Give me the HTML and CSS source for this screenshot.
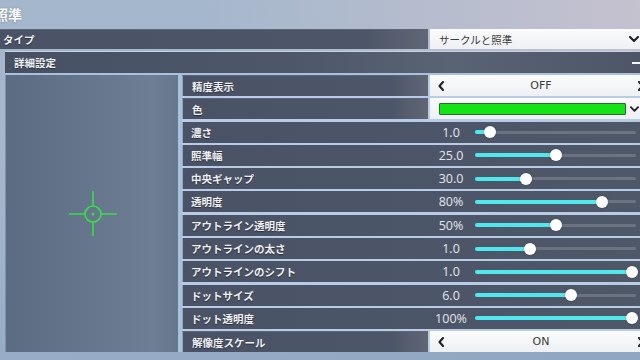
FILE: index.html
```html
<!DOCTYPE html>
<html lang="ja">
<head>
    <meta charset="utf-8">
    <title>照準</title>
    <link rel="stylesheet" href="styles.css">
</head>
<body>
    <h1 class="title">照準</h1>

    <div class="type-row">
        <div class="cell">タイプ</div>
        <div class="select dropdown">
            <span>サークルと照準</span>
            <svg class="chev-down" width="10" height="6" viewBox="0 0 10 6"><path d="M1 1 L5 5 L9 1" /></svg>
        </div>
    </div>

    <section class="advanced">
        <div class="advanced-head">
            <span>詳細設定</span>
            <span class="collapse"></span>
        </div>
        <div class="advanced-body">
            <div class="preview">
                <svg class="crosshair" width="48" height="48" viewBox="0 0 48 48">
                    <circle cx="24" cy="24" r="8" />
                    <path d="M0 24 H16 M32 24 H48 M24 1 V16 M24 32 V46" />
                    <circle class="dot" cx="24" cy="24" r="1.6" />
                </svg>
            </div>

            <div class="rows">
                <div class="row pick">
                    <div class="cell">精度表示</div>
                    <div class="select stepper">
                        <svg class="chev" width="6" height="10" viewBox="0 0 6 10"><path d="M5 1 L1.5 5 L5 9" /></svg>
                        <span>OFF</span>
                        <svg class="chev" width="6" height="10" viewBox="0 0 6 10"><path d="M1 1 L4.5 5 L1 9" /></svg>
                    </div>
                </div>
                <div class="row pick">
                    <div class="cell">色</div>
                    <div class="select dropdown">
                        <span class="swatch"></span>
                        <svg class="chev-down" width="9" height="6" viewBox="0 0 10 6"><path d="M1 1 L5 5 L9 1" /></svg>
                    </div>
                </div>
                <div class="row slide" style="--v:0.066">
                    <span class="cell">濃さ</span><span class="value">1.0</span>
                    <span class="track"><i class="fill"></i><i class="thumb"></i></span>
                </div>
                <div class="row slide" style="--v:0.5">
                    <span class="cell">照準幅</span><span class="value">25.0</span>
                    <span class="track"><i class="fill"></i><i class="thumb"></i></span>
                </div>
                <div class="row slide" style="--v:0.3">
                    <span class="cell">中央ギャップ</span><span class="value">30.0</span>
                    <span class="track"><i class="fill"></i><i class="thumb"></i></span>
                </div>
                <div class="row slide" style="--v:0.8">
                    <span class="cell">透明度</span><span class="value">80%</span>
                    <span class="track"><i class="fill"></i><i class="thumb"></i></span>
                </div>
                <div class="row slide" style="--v:0.5">
                    <span class="cell">アウトライン透明度</span><span class="value">50%</span>
                    <span class="track"><i class="fill"></i><i class="thumb"></i></span>
                </div>
                <div class="row slide" style="--v:0.33">
                    <span class="cell">アウトラインの太さ</span><span class="value">1.0</span>
                    <span class="track"><i class="fill"></i><i class="thumb"></i></span>
                </div>
                <div class="row slide" style="--v:1">
                    <span class="cell">アウトラインのシフト</span><span class="value">1.0</span>
                    <span class="track"><i class="fill"></i><i class="thumb"></i></span>
                </div>
                <div class="row slide" style="--v:0.6">
                    <span class="cell">ドットサイズ</span><span class="value">6.0</span>
                    <span class="track"><i class="fill"></i><i class="thumb"></i></span>
                </div>
                <div class="row slide" style="--v:1">
                    <span class="cell">ドット透明度</span><span class="value">100%</span>
                    <span class="track"><i class="fill"></i><i class="thumb"></i></span>
                </div>
                <div class="row pick">
                    <div class="cell">解像度スケール</div>
                    <div class="select stepper">
                        <svg class="chev" width="6" height="10" viewBox="0 0 6 10"><path d="M5 1 L1.5 5 L5 9" /></svg>
                        <span>ON</span>
                        <svg class="chev" width="6" height="10" viewBox="0 0 6 10"><path d="M1 1 L4.5 5 L1 9" /></svg>
                    </div>
                </div>
            </div>
        </div>
    </section>
</body>
</html>
```

FILE: styles.css
```css
* { box-sizing: border-box; }

body {
    margin: 0;
    width: 640px;
    height: 360px;
    overflow: hidden;
    font-family: "Noto Sans CJK JP", "Noto Sans", sans-serif;
    background: linear-gradient(170deg, #a5b7cc 0%, #a3b6cc 40%, #8fa5c1 100%);
}
body::before {
    content: "";
    position: absolute;
    inset: 0 0 auto 0;
    height: 60px;
    background: linear-gradient(90deg, rgba(200, 196, 210, 0) 30%, rgba(205, 196, 208, 0.8) 100%);
    z-index: -1;
}

.title {
    margin: 0 0 0 -6px;
    height: 29px;
    padding-top: 6px;
    font-size: 14px;
    line-height: 16px;
    font-weight: bold;
    color: #fff;
    text-shadow: 0 0 2px rgba(60, 70, 90, 0.5);
}

.cell {
    display: flex;
    align-items: center;
    height: 100%;
    padding-left: 9px;
    font-size: 10.5px;
    font-weight: bold;
    color: #eef0f4;
    text-shadow: 0 1px 1px rgba(0, 0, 0, 0.45);
    background: linear-gradient(90deg, #4a5265 0%, #4d5668 85%, #5f6776 100%);
    border-left: 1px solid #8ea3bd;
    border-top: 1px solid #5c6576;
}

.type-row { display: flex; gap: 2px; height: 20px; }
.type-row .cell { width: 428px; padding-left: 3px; border-left: 0; }

.select {
    display: flex;
    align-items: center;
    width: 210px;
    height: 100%;
    background: linear-gradient(180deg, #fbfbfc, #eef0f3);
    color: #3a3a3a;
    font-size: 10.5px;
}
.dropdown { justify-content: space-between; padding: 0 1px 0 9px; }
.stepper { justify-content: space-between; padding: 0 0 0 8px; font-family: "DejaVu Sans", sans-serif; font-size: 11px; }
.stepper svg:last-child { margin-right: -4px; }

.chev-down path, .chev path { fill: none; stroke: #1e1e22; stroke-width: 2; stroke-linecap: round; stroke-linejoin: round; }

.swatch {
    width: 187px;
    height: 12px;
    background: #14e316;
    border: 1px solid #2d6a32;
    border-radius: 1px;
}

.advanced { margin: 2px 0 0 5px; background: #a9c1dc; }
.advanced-head {
    display: flex;
    justify-content: space-between;
    align-items: center;
    height: 22px;
    padding-left: 9px;
    font-size: 10.5px;
    font-weight: bold;
    color: #eef0f4;
    text-shadow: 0 1px 1px rgba(0, 0, 0, 0.45);
    background: linear-gradient(90deg, #485063 0%, #4e576a 45%, #5a6373 70%, #4d5567 100%);
    border-top: 1px solid #c4d2e2;
}
.collapse { width: 8px; height: 2px; background: #f2f4f7; }

.advanced-body { display: flex; gap: 4px; margin-top: 2px; }

.preview {
    display: flex;
    align-items: center;
    justify-content: center;
    width: 173px;
    height: 277px;
    background: linear-gradient(90deg, #5b6b82 0%, #66768c 50%, #6e7e94 85%, #66768b 100%);
    border-left: 1px solid #7e93ae;
}
.crosshair { margin-left: 1px; }
.crosshair circle, .crosshair path { fill: none; stroke: #37df47; stroke-width: 1.6; }
.crosshair .dot { fill: #37df47; stroke: none; }

.rows {
    display: flex;
    flex-direction: column;
    gap: 2.3px;
    width: 458px;
    background: #b8cde5;
}
.row { height: 21px; }
.pick { display: flex; gap: 2px; }
.pick .cell { width: 246px; }

.slide {
    display: grid;
    grid-template-columns: 248px 40px 1fr;
    align-items: center;
    background: linear-gradient(90deg, #4a5265 0%, #4d5668 60%, #4f5869 100%);
    border-left: 1px solid #8ea3bd;
}
.slide .cell { background: none; border: 0; padding-left: 8px; }
.value {
    text-align: center;
    font-family: "Open Sans", sans-serif;
    font-size: 12.5px;
    color: #e3e7ed;
}

.track { position: relative; height: 100%; margin: 0 4px; }
.track::before {
    content: "";
    position: absolute;
    left: 0;
    right: 0;
    top: 9px;
    height: 3px;
    border-radius: 2px;
    background: rgba(255, 255, 255, 0.17);
}
.fill {
    position: absolute;
    left: 0;
    top: 8.5px;
    height: 4px;
    width: calc(5px + var(--v) * 152px);
    border-radius: 2px;
    background: #50e8ec;
}
.thumb {
    position: absolute;
    top: 4.5px;
    left: calc(var(--v) * 152px - 1px);
    width: 12px;
    height: 12px;
    border-radius: 50%;
    background: #fff;
    box-shadow: 0 0 2px rgba(0, 0, 0, 0.3);
}
```
